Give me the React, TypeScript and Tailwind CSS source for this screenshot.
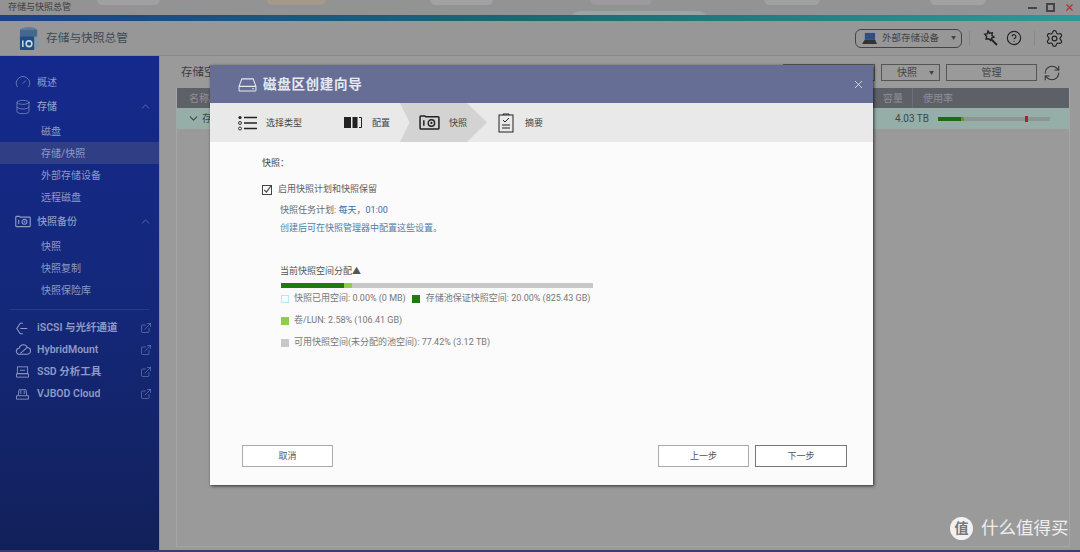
import React from 'react';
import { ChevronUp, ChevronDown, X, HelpCircle, Settings, RefreshCw, ExternalLink, Gauge, Database } from 'lucide-react';

const font = { fontFamily: 'Roboto, "Noto Sans CJK SC", sans-serif' };

function SubItem({ label, active }: { label: string; active?: boolean }) {
  return (
    <div className={`h-[22px] pl-[41px] flex items-center text-[10px] text-[#8e9ac4] ${active ? 'bg-[#303f85]' : ''}`}>
      {label}
    </div>
  );
}

function SnapIcon({ className }: { className?: string }) {
  return (
    <svg viewBox="0 0 22 18" className={className} fill="none" stroke="currentColor">
      <path d="M3 2h3l1 1h13a1 1 0 0 1 1 1v11a1 1 0 0 1-1 1H2a1 1 0 0 1-1-1V3a1 1 0 0 1 1-1z" strokeWidth="1.6" />
      <path d="M5 6.5v6" strokeWidth="1.6" />
      <circle cx="13" cy="9.5" r="3.4" strokeWidth="1.5" />
      <circle cx="13" cy="9.5" r="1.2" fill="currentColor" stroke="none" />
    </svg>
  );
}

function AppLogo() {
  return (
    <svg viewBox="0 0 22 26" className="w-[21px] h-[25px]">
      <ellipse cx="10" cy="4" rx="9" ry="3" fill="#5f7da0" />
      <rect x="1" y="4" width="18" height="8" fill="#47688e" />
      <rect x="1" y="11" width="15" height="14" rx="1" fill="#1c4f86" />
      <rect x="16" y="11" width="5" height="3" fill="#8296a8" />
      <rect x="16" y="15" width="5" height="3" fill="#8296a8" />
      <rect x="16" y="19" width="5" height="3" fill="#8296a8" />
      <path d="M4 15v7" stroke="#cfd8e0" strokeWidth="1.6" />
      <circle cx="10.5" cy="18.5" r="3" fill="none" stroke="#cfd8e0" strokeWidth="1.6" />
    </svg>
  );
}

function Sidebar() {
  const ext = [
    { label: 'iSCSI 与光纤通道', icon: <svg viewBox="0 0 16 14" className="w-[14px] h-[13px]" fill="none" stroke="currentColor" strokeWidth="1.2"><path d="M9 1H6L2 7l4 6h3M6 7h8" /></svg> },
    { label: 'HybridMount', icon: <svg viewBox="0 0 18 14" className="w-[16px] h-[12px]" fill="none" stroke="currentColor" strokeWidth="1.2"><path d="M5 12a3.5 3.5 0 0 1-.5-7A5 5 0 0 1 14 4a4 4 0 0 1-.5 8z" /><path d="M6 11l8-7" /></svg> },
    { label: 'SSD 分析工具', icon: <svg viewBox="0 0 16 14" className="w-[15px] h-[12px]" fill="none" stroke="currentColor" strokeWidth="1"><rect x="2" y="1" width="12" height="8" /><path d="M1 9h14v4H1zM5 5h6" /></svg> },
    { label: 'VJBOD Cloud', icon: <svg viewBox="0 0 16 14" className="w-[15px] h-[12px]" fill="none" stroke="currentColor" strokeWidth="1"><path d="M3 9l1-7h8l1 7M1 9h14v4H1zM6 3v4M10 3v4" /></svg> },
  ];
  return (
    <aside className="w-[160px] shrink-0 bg-gradient-to-b from-[#14298c] via-[#14287a] to-[#12205a] border-r border-[#8a8aa8] text-[#8e9ac4] pt-[15px] flex flex-col">
      <div className="h-[22px] pl-[15px] flex items-center gap-[6px] text-[10px]">
        <Gauge size={16} strokeWidth={1} />概述
      </div>
      <div className="h-[27px] pl-[15px] pr-[7px] flex items-center gap-[6px] text-[10px] font-medium">
        <Database size={16} strokeWidth={1} /><span className="flex-1">存储</span><ChevronUp size={13} strokeWidth={1} />
      </div>
      <SubItem label="磁盘" />
      <SubItem label="存储/快照" active />
      <SubItem label="外部存储设备" />
      <SubItem label="远程磁盘" />
      <div className="h-[27px] pl-[15px] pr-[7px] flex items-center gap-[6px] text-[10px] font-medium">
        <SnapIcon className="w-[16px] h-[13px]" /><span className="flex-1">快照备份</span><ChevronUp size={13} strokeWidth={1} />
      </div>
      <SubItem label="快照" />
      <SubItem label="快照复制" />
      <SubItem label="快照保险库" />
      <div className="mx-[10px] mt-[8px] mb-[7px] border-t border-[#2a3a80]" />
      {ext.map(e => (
        <div key={e.label} className="h-[22px] pl-[15px] pr-[7px] flex items-center text-[10.5px] font-semibold">
          <span className="w-[22px] shrink-0">{e.icon}</span>
          <span className="flex-1 whitespace-nowrap">{e.label}</span>
          <ExternalLink size={12} strokeWidth={1} />
        </div>
      ))}
    </aside>
  );
}

function Toolbar() {
  return (
    <div className="h-[32px] pt-[1px] pl-[21px] pr-[19px] flex items-center text-[10px] text-[#444]">
      <span className="flex-1 text-[11.5px] text-[#3d3d3d]">存储空间</span>
      <div className="w-[92px] h-[17px] border border-[#555] mr-[6px]" />
      <div className="w-[59px] h-[17px] border border-[#555] flex items-center justify-between pl-[15px] pr-[5px] mr-[6px]">
        快照<span className="text-[5px]">▼</span>
      </div>
      <div className="w-[91px] h-[17px] border border-[#555] flex items-center justify-center mr-[6px]">管理</div>
      <RefreshCw size={18} strokeWidth={1.4} className="text-[#333]" />
    </div>
  );
}

function StorageTable() {
  return (
    <div className="ml-[16px] mr-[10px] flex-1 border-x border-b border-[#a6a6a6] flex flex-col">
      <div className="h-[20px] bg-[#5e6068] text-[#8d9097] text-[10px] flex items-center">
        <span className="pl-[12px] flex-1">名称/</span>
        <span className="w-[37px] h-full flex items-center pl-[7px] border-r border-[#6d6f77]">容量</span>
        <span className="w-[156px] pl-[10px]">使用率</span>
      </div>
      <div className="h-[21px] bg-[#95aea8] text-[#3e4a48] text-[10px] flex items-center">
        <ChevronDown size={13} strokeWidth={2} className="ml-[10px] mr-[2px]" />
        <span className="flex-1">存</span>
        <span className="mr-[9px]">4.03 TB</span>
        <div className="w-[112px] h-[4px] mr-[19px] bg-[#8b9695] flex relative">
          <div className="w-[23px] bg-[#1d6b0c]" />
          <div className="w-[3px] bg-[#65933c]" />
          <div className="absolute left-[87px] top-[-1px] w-[3px] h-[6px] bg-[#a3262c]" />
        </div>
      </div>
    </div>
  );
}

function Step({ icon, label, className }: { icon: React.ReactNode; label: string; className: string }) {
  return (
    <div className={`flex items-center h-full text-[9px] text-[#444] ${className}`}>
      {icon}
      <span className="pt-[2px]">{label}</span>
    </div>
  );
}

function Wizard() {
  return (
    <div className="absolute left-[210px] top-[65px] w-[663px] h-[420px] bg-[#fbfbfb] shadow-[1px_1px_3px_rgba(0,0,0,0.7)] flex flex-col text-[#555]">
      <div className="h-[38px] bg-[#666e96] flex items-center pl-[28px] pr-[8px] text-[#e8e9f0] shrink-0">
        <svg viewBox="0 0 20 16" className="w-[19px] h-[15px] mr-[6px]" fill="none" stroke="currentColor" strokeWidth="1.1">
          <path d="M1 10l3-8h12l3 8M1 10h18v4a1 1 0 0 1-1 1H2a1 1 0 0 1-1-1z" />
          <path d="M15 12.5h2" />
        </svg>
        <span className="flex-1 text-[13.5px] font-bold tracking-[0.7px]">磁盘区创建向导</span>
        <X size={13} strokeWidth={1.5} />
      </div>
      <div className="h-[39px] bg-[#e9e9e9] flex items-center relative shrink-0">
        <div className="absolute left-[190px] top-0 w-[87px] h-full bg-[#d3d3d3] [clip-path:polygon(0_0,77%_0,100%_50%,77%_100%,0_100%,11%_50%)]" />
        <div className="relative flex items-center h-full">
          <Step
            className="w-[106px] pl-[28px]"
            label="选择类型"
            icon={
              <svg viewBox="0 0 19 16" className="w-[19px] h-[16px] mr-[9px] text-[#222]" fill="none" stroke="currentColor">
                <circle cx="2" cy="2.5" r="1.6" fill="currentColor" stroke="none" />
                <circle cx="2" cy="8" r="1.5" strokeWidth="0.9" />
                <circle cx="2" cy="13.5" r="1.5" strokeWidth="0.9" />
                <path d="M6 2.5h13M6 8h13M6 13.5h13" strokeWidth="1.3" />
              </svg>
            }
          />
          <Step
            className="w-[103px] pl-[28px]"
            label="配置"
            icon={
              <svg viewBox="0 0 18 11" className="w-[18px] h-[11px] mr-[10px] text-[#222]">
                <rect x="0" y="0" width="7" height="11" fill="currentColor" />
                <rect x="8.5" y="0" width="5" height="11" fill="currentColor" />
                <path d="M15 .5h2.5v10H15" fill="none" stroke="currentColor" />
              </svg>
            }
          />
          <Step
            className="w-[79px]"
            label="快照"
            icon={<SnapIcon className="w-[21px] h-[17px] mr-[9px] text-[#222]" />}
          />
          <Step
            label="摘要"
            className=""
            icon={
              <svg viewBox="0 0 16 20" className="w-[16px] h-[20px] mr-[11px] text-[#222]" fill="none" stroke="currentColor" strokeWidth="1">
                <rect x="1" y="2" width="14" height="17" />
                <path d="M5 2V1h6v1M4 12h8M4 15h8M5 7l2 2 4-4" />
              </svg>
            }
          />
        </div>
      </div>
      <div className="flex-1 pl-[52px] pt-[15px] text-[9px] flex flex-col min-h-0">
        <div className="h-[12px] leading-[12px] text-[#444]">快照：</div>
        <div className="mt-[15px] h-[12px] flex items-center text-[#5c5c5c]">
          <svg viewBox="0 0 10 10" className="w-[10px] h-[10px] mr-[6px] text-[#444]" fill="none" stroke="currentColor">
            <rect x="0.5" y="0.5" width="9" height="9" />
            <path d="M2.2 4.800l2.200 2.400 4.400-6" strokeWidth="1.100" />
          </svg>
          启用快照计划和快照保留
        </div>
        <div className="mt-[8px] ml-[18px] h-[12px] leading-[12px] text-[#6a6a6a]">
          快照任务计划: <span className="text-[#3a6ea8]">每天，01:00</span>
        </div>
        <div className="mt-[6px] ml-[18px] h-[12px] leading-[12px] text-[#4f7ea3]">创建后可在快照管理器中配置这些设置。</div>
        <div className="mt-[31px] ml-[18px] h-[12px] leading-[12px] text-[#555]">当前快照空间分配▲</div>
        <div className="mt-[6px] ml-[19px] w-[312px] h-[5px] bg-[#c8c8c8] flex">
          <div className="w-[63px] bg-[#1f7a10]" />
          <div className="w-[8px] bg-[#92cc4c]" />
        </div>
        <div className="ml-[19px] mt-[4px] h-[14px] flex items-center text-[#777]">
          <span className="w-[8px] h-[8px] border border-[#bfe6ee] bg-[#f3fbfd] mr-[5px]" />
          快照已用空间: 0.00% (0 MB)
          <span className="w-[8px] h-[8px] bg-[#1f7a10] ml-[6px] mr-[6px]" />
          存储池保证快照空间: 20.00% (825.43 GB)
        </div>
        <div className="ml-[19px] mt-[8px] h-[14px] flex items-center text-[#777]">
          <span className="w-[8px] h-[8px] bg-[#92cc4c] mr-[5px]" />
          卷/LUN: 2.58% (106.41 GB)
        </div>
        <div className="ml-[19px] mt-[8px] h-[14px] flex items-center text-[#777]">
          <span className="w-[8px] h-[8px] bg-[#c8c8c8] mr-[5px]" />
          可用快照空间(未分配的池空间): 77.42% (3.12 TB)
        </div>
        <div className="flex-1" />
        <div className="flex items-center h-[22px] mb-[18px] -ml-[20px] text-[#555]">
          <button className="w-[91px] h-[22px] pt-[1px] border border-[#aaa] bg-white text-[9px]">取消</button>
          <div className="flex-1" />
          <button className="w-[91px] h-[22px] pt-[1px] border border-[#aaa] bg-white text-[9px]">上一步</button>
          <button className="w-[92px] h-[22px] pt-[1px] ml-[6px] mr-[26px] border border-[#777] bg-white text-[9px]">下一步</button>
        </div>
      </div>
    </div>
  );
}

export default function App() {
  return (
    <div className="relative w-[1080px] h-[552px] overflow-hidden bg-[#9a9a9a] flex flex-col" style={font}>
      <div className="relative h-[15px] bg-[#939393] flex items-center pl-[8px] pr-[5px] text-[9px] text-[#3f3f3f] shrink-0 overflow-hidden">
        <div className="absolute left-[97px] top-[-6px] w-[63px] h-[11px] rounded-full bg-[#a0a0a0]" />
        <div className="absolute left-[267px] top-[-6px] w-[59px] h-[11px] rounded-full bg-[#a39a8c]" />
        <div className="absolute left-[430px] top-[-6px] w-[63px] h-[11px] rounded-full bg-[#a2a2a2]" />
        <div className="absolute left-[590px] top-[-6px] w-[62px] h-[11px] rounded-full bg-[#9c9a9c]" />
        <div className="absolute left-[764px] top-[-6px] w-[56px] h-[11px] rounded-full bg-[#a0a2a2]" />
        <div className="absolute left-[930px] top-[-6px] w-[56px] h-[11px] rounded-full bg-[#a2a2a2]" />
        <div className="absolute left-[570px] top-[11px] w-[138px] h-[20px] rounded-full bg-[#9ca5a2]" />
        <span className="relative flex-1">存储与快照总管</span>
        <span className="relative w-[9px] h-[2px] bg-[#444] mr-[9px]" />
        <span className="relative w-[9px] h-[9px] border-2 border-[#444] mr-[9px]" />
        <X size={11} strokeWidth={2.5} className="relative text-[#a33]" />
      </div>
      <div className="h-[6px] bg-gradient-to-r from-[#1f3f8a] via-[#1a6a70] to-[#2c9a9a] shrink-0" />
      <header className="h-[35px] bg-[#979797] flex items-center pl-[19px] pr-[16px] border-b border-[#8a8a8a] shrink-0">
        <AppLogo />
        <span className="ml-[6px] pt-[2px] flex-1 text-[11.7px] text-[#3d4a55]">存储与快照总管</span>
        <div className="w-[107px] h-[19px] rounded-[6px] border border-[#444] flex items-center pl-[6px] pr-[5px] text-[9.5px] text-[#444]">
          <svg viewBox="0 0 16 14" className="w-[15px] h-[13px] mr-[5px]">
            <path d="M3 1h11v7H3z" fill="#2c4f86" />
            <path d="M3 8h11l2 5H0z" fill="#333" />
          </svg>
          <span className="flex-1 whitespace-nowrap">外部存储设备</span>
          <span className="text-[5px]">▼</span>
        </div>
        <div className="w-px h-[15px] bg-[#888] ml-[7px] mr-[12px]" />
        <svg viewBox="0 0 16 16" className="w-[16px] h-[16px] text-[#222] mr-[8px]" fill="none" stroke="currentColor" strokeWidth="1.4">
          <path d="M6 1l1.600 2.200 2.700-.4-.4 2.700L12 7l-2.400 1-.9 2.600-2-1.800-2.700.2.600-2.600L2.800 4.300l2.700-.6z" />
          <path d="M9.500 9.500L15 15" strokeWidth="1.800" />
        </svg>
        <HelpCircle size={16} strokeWidth={1.7} className="text-[#222] mr-[12px]" />
        <div className="w-px h-[15px] bg-[#888] mr-[10px]" />
        <Settings size={19} strokeWidth={1.5} className="text-[#222]" />
      </header>
      <div className="flex-1 flex min-h-0">
        <Sidebar />
        <main className="flex-1 flex flex-col min-w-0 pb-[3px]">
          <Toolbar />
          <StorageTable />
        </main>
      </div>
      <div className="h-[2px] bg-[#3c3a6e] shrink-0" />
      <Wizard />
      <div className="absolute left-[950px] top-[517px] flex items-center text-[#eee]">
        <span className="w-[23px] h-[23px] rounded-full bg-[#f2f2f2] text-[#777] flex items-center justify-center text-[14px] font-bold">值</span>
        <span className="ml-[8px] text-[17.5px] leading-[23px] whitespace-nowrap">什么值得买</span>
      </div>
    </div>
  );
}
